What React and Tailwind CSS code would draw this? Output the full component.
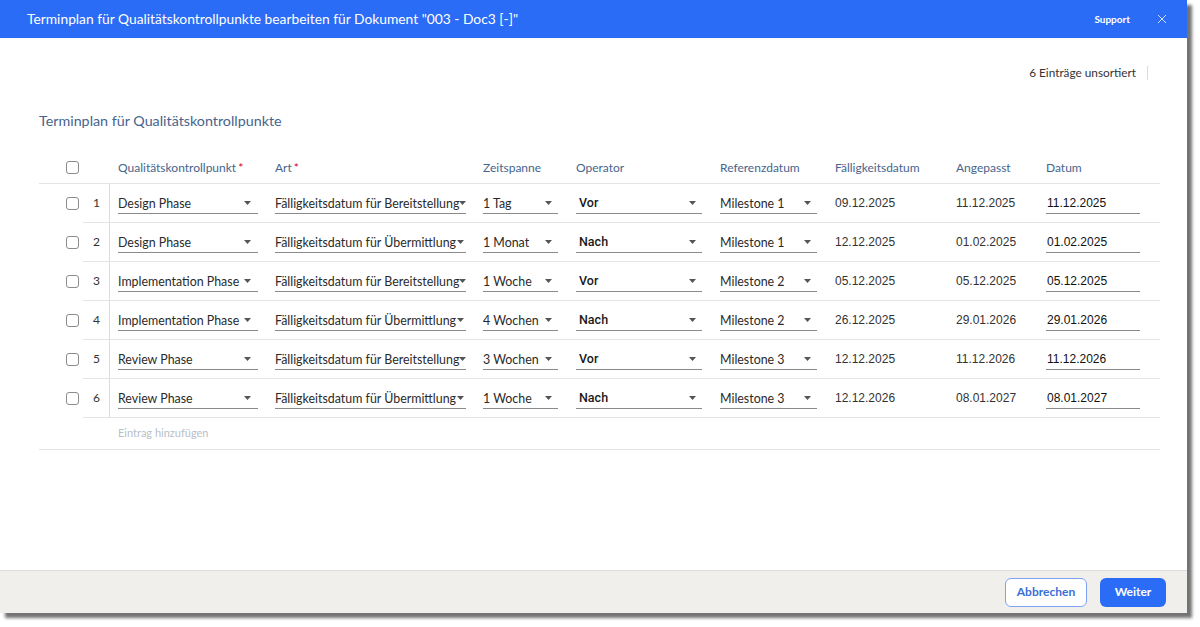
import React from "react";

const rows = [
  { n: 1, qp: "Design Phase", art: "Fälligkeitsdatum für Bereitstellung", zeit: "1 Tag", op: "Vor", ref: "Milestone 1", faellig: "09.12.2025", angepasst: "11.12.2025", datum: "11.12.2025" },
  { n: 2, qp: "Design Phase", art: "Fälligkeitsdatum für Übermittlung", zeit: "1 Monat", op: "Nach", ref: "Milestone 1", faellig: "12.12.2025", angepasst: "01.02.2025", datum: "01.02.2025" },
  { n: 3, qp: "Implementation Phase", art: "Fälligkeitsdatum für Bereitstellung", zeit: "1 Woche", op: "Vor", ref: "Milestone 2", faellig: "05.12.2025", angepasst: "05.12.2025", datum: "05.12.2025" },
  { n: 4, qp: "Implementation Phase", art: "Fälligkeitsdatum für Übermittlung", zeit: "4 Wochen", op: "Nach", ref: "Milestone 2", faellig: "26.12.2025", angepasst: "29.01.2026", datum: "29.01.2026" },
  { n: 5, qp: "Review Phase", art: "Fälligkeitsdatum für Bereitstellung", zeit: "3 Wochen", op: "Vor", ref: "Milestone 3", faellig: "12.12.2025", angepasst: "11.12.2026", datum: "11.12.2026" },
  { n: 6, qp: "Review Phase", art: "Fälligkeitsdatum für Übermittlung", zeit: "1 Woche", op: "Nach", ref: "Milestone 3", faellig: "12.12.2026", angepasst: "08.01.2027", datum: "08.01.2027" },
];

function Caret() {
  return (
    <svg width="7" height="4" viewBox="0 0 7 4" className="shrink-0">
      <path d="M0 0h7L3.5 4z" fill="#555" />
    </svg>
  );
}

function Select({ value, className = "", bold = false }) {
  return (
    <div className={`flex items-center justify-between border-b border-[#8a8a8a] h-[22px] ${className}`}>
      <span className={bold ? "font-['Roboto'] font-medium text-[12.5px] text-[#1a1a1a] pl-[3px] pt-[1px]" : "text-[12.4px] text-[#2a2a2a] whitespace-nowrap pt-[3px]"}>
        {value}
      </span>
      <Caret />
    </div>
  );
}

function Checkbox() {
  return <div className="w-[13px] h-[13px] rounded-[3px] border border-[#8c8c8c] bg-white" />;
}

function HeaderCell({ children, required, className = "" }) {
  return (
    <div className={`text-[12px] text-[#46648d] ${className}`}>
      {children}
      {required && <span className="text-[#d0021b] ml-[2px]">*</span>}
    </div>
  );
}

export default function App() {
  return (
    <div className="w-[1200px] h-[627px] bg-white font-['Lato',sans-serif]">
      <div className="w-[1187px] h-[613px] flex flex-col bg-white shadow-[5px_5px_3px_rgba(0,0,0,0.55)]">
        {/* header */}
        <div className="h-[38px] bg-[#2b6cf6] flex items-center pl-[27px] pr-[20px]">
          <div className="text-white text-[13.8px] flex-1">
            Terminplan für Qualitätskontrollpunkte bearbeiten für Dokument "003 - Doc3 [-]"
          </div>
          <div className="text-white text-[10px] font-bold mr-[27px]">Support</div>
          <svg width="10" height="10" viewBox="0 0 10 10">
            <path d="M1 1l8 8M9 1l-8 8" stroke="#cfe0ff" strokeWidth="1" />
          </svg>
        </div>

        {/* body */}
        <div className="flex-1 px-[39px] pt-[27px]">
          <div className="flex justify-end items-center h-[16px]">
            <span className="text-[11.8px] text-[#333]">6 Einträge unsortiert</span>
            <span className="ml-[11px] w-px h-[14px] bg-[#dcdcdc]" />
          </div>

          <div className="mt-[30px] h-[20px] text-[14.3px] text-[#46648d] leading-[20px]">
            Terminplan für Qualitätskontrollpunkte
          </div>

          <div className="mt-[21px] w-[1121px]">
            {/* table head */}
            <div className="flex items-center h-[32px] border-b border-[#e4e4e4]">
              <div className="w-[40px] flex justify-end"><Checkbox /></div>
              <div className="w-[39px]" />
              <HeaderCell required className="w-[157px]">Qualitätskontrollpunkt</HeaderCell>
              <HeaderCell required className="w-[208px]">Art</HeaderCell>
              <HeaderCell className="w-[93px]">Zeitspanne</HeaderCell>
              <HeaderCell className="w-[144px]">Operator</HeaderCell>
              <HeaderCell className="w-[115px]">Referenzdatum</HeaderCell>
              <HeaderCell className="w-[121px]">Fälligkeitsdatum</HeaderCell>
              <HeaderCell className="w-[90px]">Angepasst</HeaderCell>
              <HeaderCell>Datum</HeaderCell>
            </div>

            {rows.map((r) => (
              <div key={r.n} className="flex items-center h-[39px]">
                <div className="w-[40px] h-full flex items-center justify-end"><Checkbox /></div>
                <div className="flex-1 flex items-center h-full border-b border-[#e4e4e4] ml-[4px]">
                  <div className="w-[27px] h-full flex items-center border-r border-[#dcdcdc] text-[12px] text-[#333] pl-[10px]">{r.n}</div>
                  <div className="w-[8px]" />
                  <Select value={r.qp} className="w-[140px] mr-[17px] pr-[7px]" />
                  <Select value={r.art} className="w-[191px] mr-[17px] pr-[2px]" />
                  <Select value={r.zeit} className="w-[75px] mr-[18px] pr-[6px]" />
                  <Select value={r.op} bold className="w-[126px] mr-[18px] pr-[6px]" />
                  <Select value={r.ref} className="w-[97px] mr-[18px] pr-[6px]" />
                  <div className="w-[121px] font-['Liberation_Sans'] text-[12px] text-[#333]">{r.faellig}</div>
                  <div className="w-[90px] font-['Liberation_Sans'] text-[12px] text-[#333]">{r.angepasst}</div>
                  <div className="w-[94px] h-[22px] border-b border-[#8a8a8a] font-['Liberation_Sans'] text-[12px] text-[#111] pl-[1px] pt-[1px] flex items-center">{r.datum}</div>
                </div>
              </div>
            ))}

            <div className="flex items-center h-[32px] border-b border-[#e4e4e4]">
              <div className="pl-[79px] text-[11px] text-[#b8c0c8]">Eintrag hinzufügen</div>
            </div>
          </div>
        </div>

        {/* footer */}
        <div className="h-[43px] bg-[#f0efeb] border-t border-[#dcdcd8] flex items-center justify-end pr-[21px] gap-[13px]">
          <button className="h-[29px] w-[82px] rounded-[6px] border border-[#7ea3f4] bg-white text-[12px] font-bold text-[#3a6fd8]">Abbrechen</button>
          <button className="h-[29px] w-[66px] rounded-[6px] bg-[#2b6cf6] text-[12px] font-bold text-white">Weiter</button>
        </div>
      </div>
    </div>
  );
}
